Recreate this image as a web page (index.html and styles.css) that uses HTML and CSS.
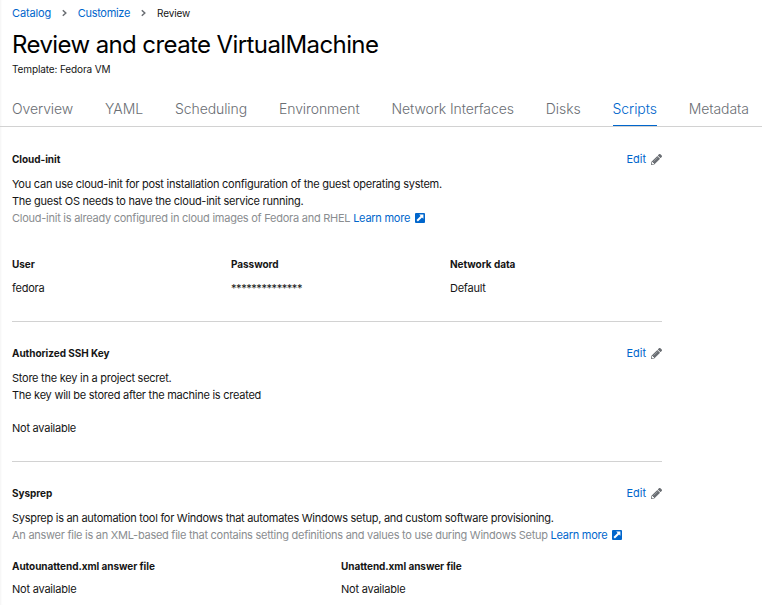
FILE: index.html
```html
<!DOCTYPE html>
<html lang="en">
<head>
<meta charset="utf-8">
<title>Review and create VirtualMachine</title>
<link rel="stylesheet" href="styles.css">
</head>
<body>
<svg class="defs" aria-hidden="true">
  <symbol id="pencil" viewBox="0 0 512 512"><path d="M497.900 142.100l-46.100 46.100c-4.700 4.700-12.300 4.700-17 0l-111-111c-4.700-4.700-4.700-12.300 0-17l46.100-46.100c18.700-18.700 49.100-18.700 67.900 0l60.100 60.100c18.800 18.700 18.800 49.100 0 67.900zM284.200 99.800L21.600 362.400.4 483.900c-2.900 16.400 11.400 30.600 27.800 27.800l121.500-21.300 262.600-262.600c4.700-4.700 4.700-12.300 0-17l-111-111c-4.800-4.700-12.400-4.700-17.100 0zM88 424h48v36.300l-64.500 11.300-31.100-31.100L51.700 376H88v48z"/><path d="M120 350L305 165" stroke="#b8bbbe" stroke-width="26"/></symbol>
  <symbol id="external" viewBox="0 0 10 10"><rect width="10" height="10" rx="1"/><path d="M4.200 1.600h4.200v4.200L7 4.400 2.900 8.500 1.500 7.100 5.600 3z" fill="#fff"/></symbol>
  <symbol id="chevron" viewBox="0 0 5 8"><path d="M.8 1.200L3.800 4 .8 6.800" fill="none" stroke="#6a6e73" stroke-width="1.500"/></symbol>
</svg>
<header class="header">
  <nav class="breadcrumb">
    <a class="crumb-catalog">Catalog</a>
    <svg class="chevron"><use href="#chevron"/></svg>
    <a class="crumb-customize">Customize</a>
    <svg class="chevron"><use href="#chevron"/></svg>
    <span class="current">Review</span>
  </nav>
  <h1>Review and create VirtualMachine</h1>
  <p class="template">Template: Fedora VM</p>
</header>
<nav class="tabs">
  <a>Overview</a><a>YAML</a><a>Scheduling</a><a>Environment</a><a>Network Interfaces</a><a>Disks</a><a class="active">Scripts</a><a>Metadata</a>
</nav>
<main>
  <section class="cloud">
    <div class="head"><h2>Cloud-init</h2><a class="edit">Edit <svg class="pencil"><use href="#pencil"/></svg></a></div>
    <p>You can use cloud-init for post installation configuration of the guest operating system.</p>
    <p>The guest OS needs to have the cloud-init service running.</p>
    <p class="muted">Cloud-init is already configured in cloud images of Fedora and RHEL <a>Learn more<svg class="external"><use href="#external"/></svg></a></p>
    <dl class="fields three">
      <div><dt>User</dt><dd>fedora</dd></div>
      <div><dt>Password</dt><dd class="mask">**************</dd></div>
      <div><dt>Network data</dt><dd>Default</dd></div>
    </dl>
  </section>
  <section class="ssh">
    <div class="head"><h2>Authorized SSH Key</h2><a class="edit">Edit <svg class="pencil"><use href="#pencil"/></svg></a></div>
    <p>Store the key in a project secret.</p>
    <p>The key will be stored after the machine is created</p>
    <p class="status">Not available</p>
  </section>
  <section class="sysprep">
    <div class="head"><h2>Sysprep</h2><a class="edit">Edit <svg class="pencil"><use href="#pencil"/></svg></a></div>
    <p>Sysprep is an automation tool for Windows that automates Windows setup, and custom software provisioning.</p>
    <p class="muted">An answer file is an XML-based file that contains setting definitions and values to use during Windows Setup <a>Learn more<svg class="external"><use href="#external"/></svg></a></p>
    <dl class="fields two">
      <div><dt>Autounattend.xml answer file</dt><dd>Not available</dd></div>
      <div><dt>Unattend.xml answer file</dt><dd>Not available</dd></div>
    </dl>
  </section>
</main>
</body>
</html>
```
FILE: styles.css
```css
* { box-sizing: border-box; }
html { overflow: hidden; }
body { margin: 0; height: 605px; overflow: hidden; background: #fff; color: #151515; font: 11px/17px Inter, "Liberation Sans", sans-serif; letter-spacing: -0.25px; white-space: nowrap; box-shadow: inset 2px 0 2px -1px #f4f4f4; }
h1, h2, p, dl, dd { margin: 0; }
a { color: #06c; }
.defs { position: absolute; width: 0; height: 0; }
.header { padding: 4px 12px 0; }
.breadcrumb { display: flex; align-items: center; height: 18px; letter-spacing: -0.12px; }
.crumb-customize { letter-spacing: -0.3px; }
.chevron { width: 5px; height: 8px; margin: 0 11px; }
.chevron:first-of-type { margin: 0 10.500px 0 11px; }
.current { font-size: 10px; letter-spacing: -0.15px; }
h1 { margin-top: 7px; font-size: 24px; font-weight: 420; line-height: 31px; letter-spacing: -0.6px; color: #000; }
.template { margin-top: 1px; font-size: 10px; line-height: 16px; letter-spacing: -0.12px; }
.tabs { display: flex; gap: 32px; height: 50px; padding: 15px 12px 0; border-bottom: 1px solid #d2d2d2; font-size: 14px; font-weight: 350; line-height: 34px; letter-spacing: -0.09px; }
.tabs a { height: 34px; color: #6a6e73; }
.tabs .active { color: #06c; box-shadow: inset 0 -1px #06c; }
main { width: 662px; padding-left: 12px; }
section { border-bottom: 1px solid #d2d2d2; padding-top: 23px; }
.cloud { height: 195px; padding-top: 24px; }
.ssh { height: 140px; }
.sysprep { border: 0; letter-spacing: -0.280px; }
.sysprep .muted { letter-spacing: -0.265px; }
.sysprep dd { letter-spacing: -0.22px; }
.head { display: flex; justify-content: space-between; align-items: center; height: 17px; margin-bottom: 8px; }
h2, dt { font-size: 10px; font-weight: 650; letter-spacing: -0.05px; }
h2 { line-height: 17px; }
.edit { display: flex; align-items: center; gap: 5px; letter-spacing: 0; }
.pencil { width: 11px; height: 11px; fill: #6a6e73; }
.muted { color: #8a8d90; }
.external { width: 10px; height: 10px; margin-left: 5px; vertical-align: -1px; fill: #06c; }
.fields { display: grid; }
.three { grid-template-columns: 219px 219px auto; margin-top: 29px; }
.three dd { margin-top: 7px; }
.two { grid-template-columns: 329px auto; margin-top: 14px; }
dd { margin-top: 6px; }
.mask { letter-spacing: -0.44px; }
.status { margin-top: 16px; }
```
